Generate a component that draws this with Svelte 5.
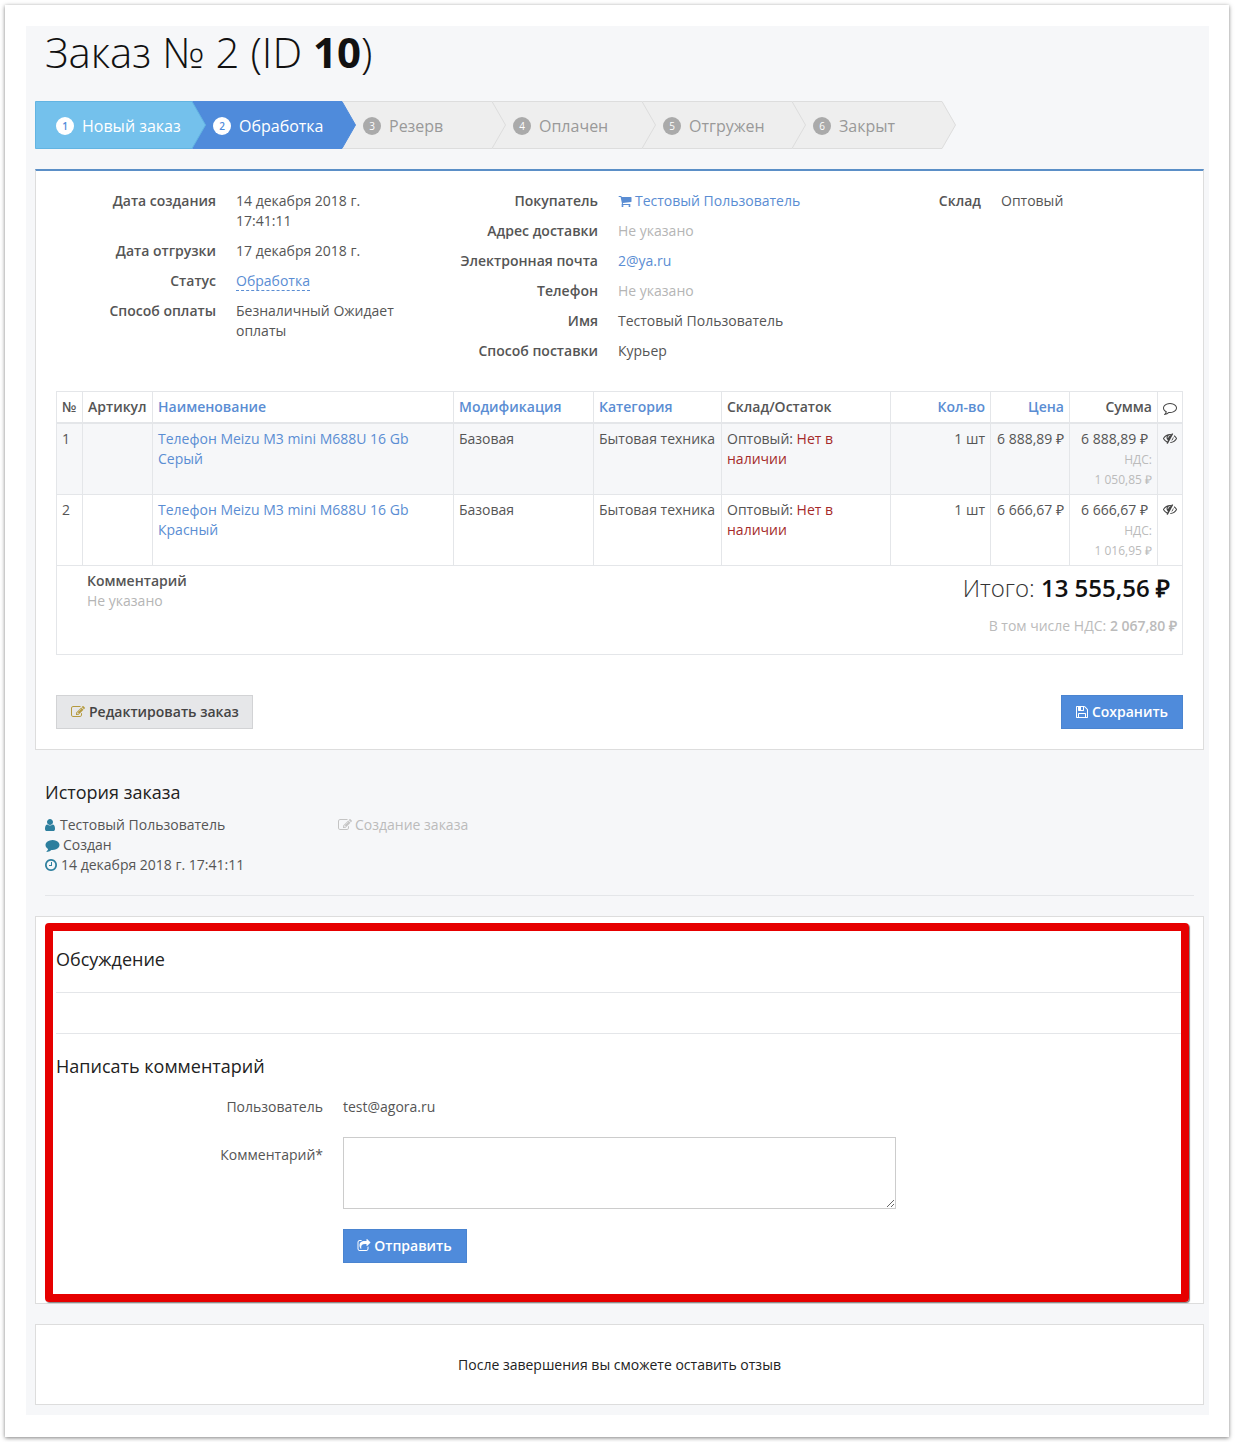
<script>
  const icons = {
    user: 'M1536 1399q0 109-62.5 187t-150.5 78h-854q-88 0-150.5-78t-62.5-187q0-85 8.5-160.5t31.5-152 58.5-131 94-89 134.5-34.5q131 128 313 128t313-128q76 0 134.5 34.5t94 89 58.5 131 31.5 152 8.5 160.5zm-256-887q0 159-112.5 271.5t-271.5 112.5-271.5-112.5-112.5-271.5 112.5-271.5 271.5-112.5 271.5 112.5 112.5 271.5z',
    comment: 'M1792 896q0 174-120 321.5t-326 233-450 85.5q-70 0-145-8-198 175-460 242-49 14-114 22-17 2-30.5-9t-17.5-29v-1q-3-4-.5-12t2-10 4.5-9.5l6-9 7-8.5 8-9q7-8 31-34.5t34.5-38 31-39.5 32.5-51 27-59 26-76q-157-89-247.5-220t-90.5-281q0-130 71-248.5t191-204.5 286-136.5 348-50.5q244 0 450 85.5t326 233 120 321.5z',
    clock: 'M1024 544v448q0 14-9 23t-23 9h-320q-14 0-23-9t-9-23v-64q0-14 9-23t23-9h224v-352q0-14 9-23t23-9h64q14 0 23 9t9 23zm416 352q0-148-73-273t-198-198-273-73-273 73-198 198-73 273 73 273 198 198 273 73 273-73 198-198 73-273zm224 0q0 209-103 385.5t-279.5 279.5-385.5 103-385.5-103-279.5-279.5-103-385.5 103-385.5 279.5-279.5 385.5-103 385.5 103 279.5 279.5 103 385.5z',
    cart: 'M704 1536q0 52-38 90t-90 38-90-38-38-90 38-90 90-38 90 38 38 90zm896 0q0 52-38 90t-90 38-90-38-38-90 38-90 90-38 90 38 38 90zm128-1088v512q0 24-16.5 42.5t-40.5 21.5l-1044 122q13 60 13 70 0 16-24 64h920q26 0 45 19t19 45-19 45-45 19h-1024q-26 0-45-19t-19-45q0-11 8-31.5t16-36 21.5-40 15.5-29.5l-177-823h-204q-26 0-45-19t-19-45 19-45 45-19h256q16 0 28.5 6.5t19.5 15.5 13 24.5 8 26 5.5 29.5 4.5 26h1201q26 0 45 19t19 45z',
    edit: 'M888 1184l116-116-152-152-116 116v56h96v96h56zm440-720q-16-16-33 1l-350 350q-17 17-1 33t33-1l350-350q17-17 1-33zm80 594v190q0 119-84.5 203.5t-203.5 84.5h-832q-119 0-203.5-84.5t-84.5-203.5v-832q0-119 84.5-203.5t203.5-84.5h832q63 0 117 25 15 7 18 23 3 17-9 29l-49 49q-14 14-32 8-23-6-45-6h-832q-66 0-113 47t-47 113v832q0 66 47 113t113 47h832q66 0 113-47t47-113v-126q0-13 9-22l64-64q15-15 35-7t20 29zm-96-738l288 288-672 672h-288v-288zm444 132l-92 92-288-288 92-92q28-28 68-28t68 28l152 152q28 28 28 68t-28 68z',
    save: 'M512 1536h768v-384h-768v384zm896 0h128v-896q0-14-10-38.5t-20-34.5l-281-281q-10-10-34-20t-39-10v416q0 40-28 68t-68 28h-576q-40 0-68-28t-28-68v-416h-128v1280h128v-416q0-40 28-68t68-28h832q40 0 68 28t28 68v416zm-384-928v-320q0-13-9.5-22.5t-22.5-9.5h-192q-13 0-22.5 9.5t-9.5 22.5v320q0 13 9.5 22.5t22.5 9.5h192q13 0 22.5-9.5t9.5-22.5zm640 32v928q0 40-28 68t-68 28h-1344q-40 0-68-28t-28-68v-1344q0-40 28-68t68-28h928q40 0 88 20t76 48l280 280q28 28 48 76t20 88z',
    share: 'M1472 989v259q0 119-84.5 203.5t-203.5 84.5h-832q-119 0-203.5-84.5t-84.5-203.5v-832q0-119 84.5-203.5t203.5-84.5h255q13 0 22.5 9.5t9.5 22.5q0 27-26 32-77 26-133 60-10 4-16 4h-112q-66 0-113 47t-47 113v832q0 66 47 113t113 47h832q66 0 113-47t47-113v-214q0-19 18-29 28-13 54-37 16-16 35-8 21 9 21 29zm237-496l-384 384q-18 19-45 19-12 0-25-5-39-17-39-59v-192h-160q-323 0-438 131-119 137-74 473 3 23-20 34-8 2-12 2-16 0-26-13-10-14-21-31t-39.5-68.5-49.5-99.5-38.5-114-17.5-122q0-49 3.5-91t14-90 28-88 47-81.5 68.5-74 94.5-61.5 124.5-48.5 159.5-30.5 196.5-11h160v-192q0-42 39-59 13-5 25-5 26 0 45 19l384 384q19 19 19 45t-19 45z',
    commentO: 'M896 384q-204 0-381.5 69.5t-282 187.5-104.5 255q0 112 71.5 213.5t201.5 175.5l87 50-27 96q-24 91-70 172 152-63 275-171l43-38 57 6q69 8 130 8 204 0 381.5-69.5t282-187.5 104.5-255-104.5-255-282-187.5-381.5-69.5zm896 512q0 174-120 321.5t-326 233-450 85.5q-70 0-145-8-198 175-460 242-49 14-114 22h-5q-15 0-27-10.5t-16-27.5v-1q-3-4-.5-12t2-10 4.5-9.5l6-9 7-8.5 8-9q7-8 31-34.5t34.5-38 31-39.5 32.5-51 27-59 26-76q-157-89-247.5-220t-90.5-281q0-174 120-321.5t326-233 450-85.5 450 85.5 326 233 120 321.5z',
    eyeSlash: 'M555 1335l78-141q-87-63-136-159t-49-203q0-121 61-225-229 117-381 353 167 258 427 375zm389-759q0-20-14-34t-34-14q-125 0-214.5 89.5t-89.5 214.5q0 20 14 34t34 14 34-14 14-34q0-86 61-147t147-61q20 0 34-14t14-34zm363-191q0 7-1 9-106 189-316 567t-315 566l-49 89q-10 16-28 16-12 0-134-70-16-10-16-28 0-12 44-87-143-65-263.5-173t-208.5-245q-20-31-20-69t20-69q153-235 380-371t496-136q89 0 180 17l54-97q10-16 28-16 5 0 18 6t31 15.5 33 18.5 31.5 18.5 19.5 11.5q16 10 16 27zm37 447q0 139-79 253.5t-209 164.5l280-502q8 45 8 84zm448 128q0 35-20 69-39 64-109 145-150 172-347.5 267t-419.5 95l74-132q212-18 392.5-137t301.5-307q-115-179-282-294l63-112q95 64 182.5 153t144.5 184q20 34 20 69z'
  };

  const steps = [
    { n: 1, title: 'Новый заказ', w: 157, state: 'done' },
    { n: 2, title: 'Обработка', w: 150, state: 'active' },
    { n: 3, title: 'Резерв', w: 150, state: 'todo' },
    { n: 4, title: 'Оплачен', w: 150, state: 'todo' },
    { n: 5, title: 'Отгружен', w: 150, state: 'todo' },
    { n: 6, title: 'Закрыт', w: 150, state: 'todo' }
  ];

  const items = [
    { n: 1, color: 'Серый', price: '6 888,89 ₽', vat: '1 050,85 ₽' },
    { n: 2, color: 'Красный', price: '6 666,67 ₽', vat: '1 016,95 ₽' }
  ];
</script>

{#snippet icon(name, cls = '')}
  <svg class="icon {cls}" viewBox="0 0 1792 1792" aria-hidden="true"><path d={icons[name]} fill="currentColor" /></svg>
{/snippet}

<div class="frame">
  <div class="page">
    <h1>Заказ № 2 (ID <b>10</b>)</h1>

    <div class="steps">
      {#each steps as s, i}
        <div class="step {s.state}" style="width:{s.w}px;z-index:{6 - i}">
          <svg class="shape" width={s.w + 15} height="48" aria-hidden="true">
            <polygon points="0.5,0.5 {s.w},0.5 {s.w + 13.5},24 {s.w},47.5 0.5,47.5" />
          </svg>
          <span class="num">{s.n}</span>
          <span class="step-title">{s.title}</span>
        </div>
      {/each}
    </div>

    <section class="panel main">
      <div class="details">
        <dl>
          <dt>Дата создания</dt><dd>14 декабря 2018 г. 17:41:11</dd>
          <dt>Дата отгрузки</dt><dd>17 декабря 2018 г.</dd>
          <dt>Статус</dt><dd><a href="#s" class="dashed">Обработка</a></dd>
          <dt>Способ оплаты</dt><dd>Безналичный Ожидает оплаты</dd>
        </dl>
        <dl>
          <dt>Покупатель</dt><dd><a href="#b">{@render icon('cart', 'cart')}Тестовый Пользователь</a></dd>
          <dt>Адрес доставки</dt><dd class="muted">Не указано</dd>
          <dt>Электронная почта</dt><dd><a href="#m">2@ya.ru</a></dd>
          <dt>Телефон</dt><dd class="muted">Не указано</dd>
          <dt>Имя</dt><dd>Тестовый Пользователь</dd>
          <dt>Способ поставки</dt><dd>Курьер</dd>
        </dl>
        <dl>
          <dt>Склад</dt><dd>Оптовый</dd>
        </dl>
      </div>

      <table>
        <colgroup>
          <col style="width:26px" /><col style="width:70px" /><col style="width:301px" /><col style="width:140px" />
          <col style="width:128px" /><col style="width:169px" /><col style="width:100px" /><col style="width:79px" />
          <col style="width:88px" /><col style="width:25px" />
        </colgroup>
        <thead>
          <tr>
            <th>№</th><th>Артикул</th>
            <th><a href="#n">Наименование</a></th>
            <th><a href="#v">Модификация</a></th>
            <th><a href="#c">Категория</a></th>
            <th>Склад/Остаток</th>
            <th class="r"><a href="#q">Кол-во</a></th>
            <th class="r"><a href="#p">Цена</a></th>
            <th class="r">Сумма</th>
            <th class="c">{@render icon('commentO', 'cell-icon')}</th>
          </tr>
        </thead>
        <tbody>
          {#each items as item}
            <tr>
              <td>{item.n}</td>
              <td></td>
              <td><a href="#i">Телефон Meizu M3 mini M688U 16 Gb {item.color}</a></td>
              <td>Базовая</td>
              <td>Бытовая техника</td>
              <td>Оптовый: <span class="red">Нет в наличии</span></td>
              <td class="r">1 шт</td>
              <td class="r">{item.price}</td>
              <td class="r sum-cell">
                <div class="sum">{item.price}</div>
                <div class="vat">НДС:</div>
                <div class="vat">{item.vat}</div>
              </td>
              <td class="c">{@render icon('eyeSlash', 'cell-icon')}</td>
            </tr>
          {/each}
        </tbody>
        <tfoot>
          <tr>
            <td colspan="10">
              <div class="foot">
                <div class="note">
                  <strong>Комментарий</strong>
                  <div class="muted">Не указано</div>
                </div>
                <div class="totals">
                  <div class="total">Итого: <b>13 555,56 ₽</b></div>
                  <div class="total-vat">В том числе НДС: <b>2 067,80 ₽</b></div>
                </div>
              </div>
            </td>
          </tr>
        </tfoot>
      </table>

      <div class="actions">
        <button class="btn grey">{@render icon('edit', 'gold')}Редактировать заказ</button>
        <button class="btn blue">{@render icon('save')}Сохранить</button>
      </div>
    </section>

    <section class="history">
      <h3>История заказа</h3>
      <div class="history-row">
        <div class="history-who">
          <div>{@render icon('user', 'teal shift-user')}Тестовый Пользователь</div>
          <div>{@render icon('comment', 'teal wide')}Создан</div>
          <div>{@render icon('clock', 'teal shift-clock')}14 декабря 2018 г. 17:41:11</div>
        </div>
        <div class="history-what">{@render icon('edit', 'pale')}Создание заказа</div>
      </div>
    </section>

    <section class="panel discussion">
      <h3>Обсуждение</h3>
      <hr />
      <div class="spacer"></div>
      <hr />
      <h3 class="write">Написать комментарий</h3>
      <div class="form">
        <div class="label">Пользователь</div>
        <div class="value">test@agora.ru</div>
        <div class="label pad">Комментарий*</div>
        <textarea aria-label="Комментарий"></textarea>
        <div></div>
        <div><button class="btn blue send">{@render icon('share')}Отправить</button></div>
      </div>
      <div class="highlight"></div>
    </section>

    <section class="panel review">После завершения вы сможете оставить отзыв</section>
  </div>
</div>

<style>
  :global(body) {
    background: #fff;
    font-family: "Open Sans", "Liberation Sans", sans-serif;
    font-size: 14px;
    line-height: 20px;
    color: #555;
  }

  :global(#app) {
    display: flow-root;
    height: 1442px;
  }

  a {
    color: #5a8dd3;
    text-decoration: none;
  }

  .frame {
    width: 1224px;
    height: 1432px;
    box-sizing: border-box;
    margin: 5px 0 0 5px;
    padding: 21px 20px 22px 21px;
    background: #fff;
    box-shadow: 0 1px 4px rgba(0, 0, 0, 0.5);
  }

  .page {
    height: 1389px;
    box-sizing: border-box;
    padding: 0 5px 0 9px;
    background: #f6f7f9;
  }

  h1 {
    margin: 0 0 23px;
    padding-left: 10px;
    font-size: 42px;
    line-height: 52px;
    font-weight: 300;
    color: #111;
  }

  h1 b {
    font-weight: 700;
  }

  .steps {
    display: flex;
    height: 48px;
  }

  .step {
    position: relative;
    display: flex;
    align-items: center;
    box-sizing: border-box;
    padding: 2px 0 0 21px;
    font-size: 16px;
    color: #999;
  }

  .shape {
    position: absolute;
    left: 0;
    top: 0;
    overflow: visible;
  }

  .shape polygon {
    fill: #eee;
    stroke: #ddd;
  }

  .done .shape polygon {
    fill: #74c1ec;
    stroke: #62b4e2;
  }

  .active .shape polygon {
    fill: #4f8bdb;
    stroke: #4f8bdb;
  }

  .num {
    position: relative;
    width: 18px;
    height: 18px;
    margin-right: 8px;
    border-radius: 50%;
    background: #aaa;
    color: #fff;
    font-size: 10px;
    line-height: 18px;
    text-align: center;
  }

  .step-title {
    position: relative;
    white-space: nowrap;
  }

  .done, .active {
    color: #fff;
  }

  .done .num, .active .num {
    background: #fff;
    color: #4f8bdb;
    font-weight: 600;
  }

  .panel {
    position: relative;
    box-sizing: border-box;
    background: #fff;
    border: 1px solid #ddd;
  }

  .main {
    height: 581px;
    margin-top: 20px;
    padding: 20px;
    border-top: 2px solid #5b8fc7;
  }

  .details {
    display: grid;
    grid-template-columns: 382px 383px 1fr;
    height: 200px;
    margin-left: -20px;
  }

  dl {
    display: grid;
    grid-template-columns: 180px 170px;
    column-gap: 20px;
    row-gap: 10px;
    align-content: start;
    margin: 0;
  }

  dt {
    font-weight: 600;
    text-align: right;
    color: #555;
  }

  dd {
    margin: 0;
  }

  .details dl:nth-child(2) {
    grid-template-columns: 180px 200px;
  }

  .muted {
    color: #b5b5b5;
  }

  .dashed {
    border-bottom: 1px dashed #5a8dd3;
  }

  .icon {
    display: inline-block;
    width: 14px;
    height: 14px;
    margin-right: 3px;
    vertical-align: -2px;
  }

  .cart {
    margin-right: 3px;
  }

  table {
    width: 1126px;
    table-layout: fixed;
    border-collapse: collapse;
  }

  th, td {
    padding: 5px;
    border: 1px solid #e4e6e9;
    text-align: left;
    vertical-align: top;
    font-weight: 400;
  }

  th {
    height: 20px;
    font-weight: 600;
    white-space: nowrap;
    border-bottom: 2px solid #e4e6e9;
  }

  th a {
    color: #5a8dd3;
  }

  th:first-child, tbody td:first-child {
    padding-right: 0;
  }

  tbody tr:first-child {
    background: #f6f7f9;
  }

  .r, th.r {
    text-align: right;
  }

  td.c, th.c {
    padding: 6px 0 0;
    text-align: center;
  }

  .cell-icon {
    width: 14px;
    height: 14px;
    margin: 0;
    color: #444;
  }

  td.c .cell-icon {
    vertical-align: 0;
  }

  td.sum-cell {
    padding-bottom: 4px;
  }

  .sum {
    margin: 0 4px 1px 0;
    white-space: nowrap;
  }

  .vat {
    font-size: 12px;
    color: #bbb;
    white-space: nowrap;
  }

  .red {
    color: #a52a2a;
  }

  tfoot td {
    height: 78px;
    padding: 5px 5px 5px 30px;
  }

  .foot {
    display: flex;
    justify-content: space-between;
  }

  .note strong {
    font-weight: 600;
  }

  .totals {
    text-align: right;
  }

  .total {
    margin: 2px 7px 13px 0;
    font-size: 24px;
    line-height: 30px;
    font-weight: 300;
    color: #333;
  }

  .total b {
    font-weight: 600;
    color: #111;
  }

  .total-vat {
    color: #bbb;
  }

  .total-vat b {
    font-weight: 600;
  }

  .actions {
    display: flex;
    justify-content: space-between;
    margin-top: 40px;
  }

  .btn {
    height: 34px;
    box-sizing: border-box;
    padding: 0 14px;
    border: 1px solid;
    font: 600 14px/20px "Open Sans", "Liberation Sans", sans-serif;
    cursor: pointer;
  }

  .grey {
    padding-right: 13px;
    background: #e6e7e9;
    border-color: #d2d3d5;
    color: #444;
  }

  .grey .icon {
    margin-right: 4px;
  }

  .blue {
    padding-left: 13px;
    background: #4f8bdb;
    border-color: #4a84d0;
    color: #fff;
  }

  .send {
    width: 124px;
  }

  .gold {
    color: #b59a3e;
  }

  .history {
    height: 146px;
    margin: 0 10px 20px;
    padding-top: 32px;
    box-sizing: border-box;
    border-bottom: 1px solid #e4e6e9;
  }

  h3 {
    margin: 0;
    font-size: 18px;
    line-height: 20px;
    font-weight: 400;
    color: #222;
  }

  .history-row {
    display: flex;
    margin-top: 13px;
  }

  .history-who {
    width: 293px;
  }

  .history-what {
    color: #bbb;
  }

  .teal {
    color: #2d7f9e;
    margin-right: 1px;
  }

  .wide {
    margin-right: 3px;
    width: 15px;
  }

  .shift-user {
    margin-left: -2px;
    margin-right: 3px;
  }

  .shift-clock {
    margin-left: -1px;
    margin-right: 3px;
  }

  .pale {
    color: #c4c4c4;
  }

  .discussion {
    height: 388px;
    padding: 32px 20px 0;
  }

  hr {
    margin: 23px 0 0;
    border: 0;
    border-top: 1px solid #e4e6e9;
  }

  .spacer {
    height: 17px;
  }

  h3.write {
    margin-top: 22px;
  }

  .form {
    display: grid;
    grid-template-columns: 267px 553px;
    column-gap: 20px;
    row-gap: 20px;
    margin-top: 21px;
  }

  .label {
    text-align: right;
  }

  .pad {
    padding-top: 8px;
  }

  textarea {
    display: block;
    width: 553px;
    height: 72px;
    box-sizing: border-box;
    margin: 0;
    border: 1px solid #ccc;
    background: #fff;
  }

  .highlight {
    position: absolute;
    left: 9px;
    top: 6px;
    width: 1144px;
    height: 379px;
    box-sizing: border-box;
    border: 8px solid #e60000;
    border-radius: 4px;
    box-shadow: 1px 1px 1px rgba(0, 0, 0, 0.5);
    pointer-events: none;
  }

  .review {
    display: flex;
    align-items: center;
    justify-content: center;
    height: 81px;
    margin-top: 20px;
    color: #222;
  }
</style>
